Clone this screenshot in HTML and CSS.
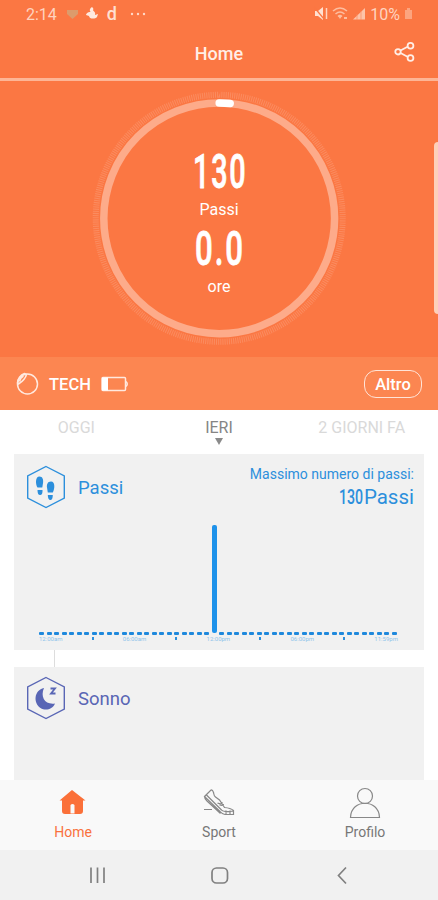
FILE: index.html
```html
<!DOCTYPE html>
<html lang="it">
<head>
<meta charset="utf-8" />
<meta name="viewport" content="width=device-width, initial-scale=1" />
<title>Home</title>
<link rel="stylesheet" href="styles.css">
</head>

<body>
<div class="phone">
	<div class="status">
		<span class="time">2:14</span>
		<svg class="heart" width="42" height="16" viewBox="0 0 42 16">
			<path d="M2 4h11v4l-5.500 5L2 8z" fill="#dc9b6c"/>
			<path d="M27 1c-2 1-3 3-1.500 5-2-.5-4.500 1-4.500 3l3 1c0 3 6 3.500 8 1l1-3-3 1c1-3-2-4-2-5 1-1 0-2-1-3z" fill="#ffe9df"/>
		</svg>
		<span class="d">d</span>
		<svg class="dots" width="16" height="4" viewBox="0 0 16 4">
			<circle cx="2" cy="2" r="1.200"/><circle cx="8" cy="2" r="1.200"/><circle cx="14" cy="2" r="1.200"/>
		</svg>
		<svg class="signal" width="54" height="16" viewBox="0 0 54 16">
			<path d="M3 5h3l5-4v13l-5-4H3z" fill="#ffe0d1"/>
			<path d="M2 1l10 12" stroke="#fb7743" stroke-width="1.200"/>
			<path d="M14.500 2v11" stroke="#ffd3bf" stroke-width="1.500"/>
			<g fill="none" stroke="#fdbd9f" stroke-width="1.500"><path d="M21 5q7-6 14 0M23.500 8q4.500-4 9 0M26 10.500q2-2 4 0"/></g>
			<path d="M28 13l-2-3h4zM32 11h3v2h-3z" fill="#fdbd9f"/>
			<path d="M41 13.500L53 2v11.500z" fill="#fdc3a8"/>
			<path d="M45 8v6M49 5v9" stroke="#fb8b5f" stroke-width=".7"/>
		</svg>
		<span class="percent">10%</span>
		<svg width="9" height="12" viewBox="0 0 9 12"><path d="M1 2h2V0h3v2h2v9H1z" fill="#fca47f"/></svg>
	</div>
	<div class="title">
		<h1>Home</h1>
		<svg class="share" width="22" height="22" viewBox="0 0 22 22">
			<path d="M6.500 9.500l7.500-4M6.500 12l7.500 4"/>
			<circle cx="4" cy="10.800" r="2.700"/><circle cx="16.500" cy="4.800" r="2.900"/><circle cx="16.500" cy="17" r="2.900"/>
		</svg>
	</div>
	<div class="hero">
		<svg width="438" height="276" viewBox="0 0 438 276">
			<circle class="ticks" cx="219.200" cy="137.300" r="123.500" pathLength="720"/>
			<circle class="ring" cx="219.200" cy="137.300" r="115.400"/>
			<path class="done" d="M219.200 21.900a115.400 115.400 0 0 1 11 .5"/>
			<text class="num" x="193" y="107" textLength="54.500" lengthAdjust="spacingAndGlyphs">130</text>
			<text class="unit" x="219" y="133.500">Passi</text>
			<text class="num" x="195" y="183.500" textLength="50" lengthAdjust="spacingAndGlyphs">0.0</text>
			<text class="unit" x="219" y="210.500">ore</text>
		</svg>
	</div>
	<div class="device">
		<svg class="band" width="24" height="24" viewBox="0 0 24 24">
			<circle cx="12.500" cy="12" r="10"/>
			<path d="M2.500 11c0-4 3-8 7-9.500l2 1c-1 4-4 7-8 9.500zM4.500 9.500c.5-2.500 2-4.500 4-5.500"/>
		</svg>
		<span class="name">TECH</span>
		<svg class="battery" width="28" height="16" viewBox="0 0 28 16">
			<rect x="1" y="1.500" width="23.500" height="13" rx="1"/><path d="M25 5.500q2.500 2.500 0 5"/>
			<path class="full" d="M1 1.500h6v13H1z"/>
		</svg>
		<a class="more">Altro</a>
	</div>
	<ul class="days">
		<li>OGGI</li>
		<li class="current">IERI</li>
		<li>2 GIORNI FA</li>
	</ul>
	<div class="list">
		<div class="card steps">
			<div class="head">
				<svg width="40" height="44" viewBox="0 0 40 44">
					<path class="hex" d="M20 1.500L38.300 11v22L20 42.500 1.700 33V11z"/>
					<path d="M13.500 11.500c3 0 4 3 3.600 6l-.8 5h-4.800c-2-3-2.500-11 2-11zM11.500 25h5c.2 3-.5 5-2.400 5s-2.600-2-2.600-5z"/>
					<path d="M25 16.500c-3.500 0-4.300 3-4 6l.8 5h5c2-3.500 2.600-11-1.800-11zM21.800 30h5c0 3-.8 5-2.400 5s-2.600-2-2.600-5z"/>
				</svg>
				<h2>Passi</h2>
				<div class="max">
					<p>Massimo numero di passi:</p>
					<div class="total"><b>130</b><span>Passi</span></div>
				</div>
			</div>
			<div class="chart" id="chart"></div>
			<div class="axis">
				<span>12:00am</span><i></i><span>06:00am</span><i></i><span>12:00pm</span><i></i><span>06:00pm</span><i></i><span>11:59pm</span>
			</div>
		</div>
		<div class="card sleep">
			<div class="head">
				<svg width="40" height="44" viewBox="0 0 40 44">
					<path class="hex" d="M20 1.500L38.300 11v22L20 42.500 1.700 33V11z"/>
					<path d="M18 12C8 14 7 27 14.500 32c5 3 12 1.500 14.500-4.500C19 29 14 21 18 12z"/>
					<path class="zed" d="M24.500 12.500h4.500l-4 5h4.500"/>
				</svg>
				<h2>Sonno</h2>
			</div>
		</div>
	</div>
	<div class="nav">
		<a class="on">
			<svg width="32" height="32" viewBox="0 0 32 32"><path d="M15 3l13.500 10.500H26V24q0 3-3 3H8q-3 0-3-3V13.500H2.500zM13.500 18v8.500h4V18q-2-2-4 0z" fill-rule="evenodd"/></svg>
			<span>Home</span>
		</a>
		<a>
			<svg width="32" height="32" viewBox="0 0 32 32">
				<path d="M1.500 9.500L8 3c1.500-.5 2 1 2.500 2.500s0 3 2 4.500l4 3 5 7.500q6 .5 9 3v4H22q-3-.5-5-3zM1.500 9.500c0 2 1 3 2.500 4.500L17.500 26.500M3.500 8l15 15q2 2.500 12 1M14.500 16q5 2 4.500-1M16.500 18q4 1 4-1M23 23.500v4M27 23.500v4M1 22.500h8"/>
			</svg>
			<span>Sport</span>
		</a>
		<a>
			<svg width="32" height="32" viewBox="0 0 32 32"><circle cx="16" cy="9" r="7.500"/><path d="M1.500 30.500C2 11.500 30 11.500 30.500 30.500z"/></svg>
			<span>Profilo</span>
		</a>
	</div>
	<div class="keys">
		<svg width="438" height="50" viewBox="0 0 438 50">
			<path d="M91 17.500v15.500M97.500 17.500v15.500M104 17.500v15.500"/>
			<rect x="212" y="18" width="15.500" height="15" rx="4.500"/>
			<path d="M346 17.500l-7.500 8 7.500 8"/>
		</svg>
	</div>
	<div class="edge"></div>
</div>
<script type="text/javascript">
  // one bar for every half hour of the day
  var chart = document.getElementById("chart");
  for (var i = 0; i < 48; i++) {
    var bar = document.createElement("i");
    // 130 steps, all at noon
    if (i == 23) {
      bar.className = "peak";
      bar.style.height = "108px";
    }
    chart.appendChild(bar);
  }
</script>
</body>
</html>
```
FILE: styles.css
```css
*{ padding:0; margin:0; list-style:none; box-sizing:border-box;}
body{ font-family:Roboto, "Liberation Sans", sans-serif; background:#fff;}
h1, h2{ font-weight:400;}
svg{ display:block; flex:none;}
.phone{
	width:438px;
	height:900px;
	position:relative;
	overflow:hidden;
	display:flex;
	flex-direction:column;
}

.status{ height:28px; background:#fb7743; color:#ffd3bf; display:flex; align-items:center; padding:0 25px 0 26px; font-size:16px; flex:none;}
.heart{ margin-left:8px;}
.d{ font-size:18px; line-height:24px; font-weight:500; color:#ffe0d1; margin:0 13px 0 0;}
.dots{ fill:#ffd9c8;}
.signal{ margin-left:auto;}
.percent{ margin:0 4px 0 4px;}

.title{ height:53px; background:#fb7743; border-bottom:3px solid #fdb595; position:relative; flex:none; text-align:center;}
.title h1{ font-size:18px; font-weight:500; line-height:51px; color:#ffeee6;}
.share{ position:absolute; right:22px; top:13px; fill:none; stroke:#ffeee6; stroke-width:1.8;}

.hero{ height:276px; background:#fb7743; flex:none;}
.ticks{ fill:none; stroke:#fff; stroke-opacity:.15; stroke-width:6; stroke-dasharray:1 1;}
.ring{ fill:none; stroke:#fdab8a; stroke-width:7.5;}
.done{ fill:none; stroke:#fff; stroke-width:7.5; stroke-linecap:round;}
.num{ font-size:48px; font-weight:500; letter-spacing:3px; fill:#fff; stroke:#fff; stroke-width:.8; stroke-linejoin:round;}
.unit{ font-size:16px; fill:#fff; text-anchor:middle;}

.device{ height:53px; background:#fc8651; display:flex; align-items:center; padding:0 16px 0 15px; color:#fff; flex:none;}
.band, .battery{ fill:none; stroke:#ffe9df; stroke-width:1.5;}
.battery .full{ fill:#fff; stroke:none;}
.name{ margin:2px 10px 0 10px; font-size:16.500px; font-weight:500;}
.more{ margin-left:auto; width:58px; height:28px; border:1.5px solid #ffe4d8; border-radius:12px; font-size:16.500px; font-weight:500; line-height:27px; text-align:center;}

.days{ height:44px; display:flex; padding:0 5px; flex:none;}
.days li{ flex:1; text-align:center; font-size:16px; line-height:35px; color:#d9d9d9;}
.days .current{ color:#858585; position:relative;}
.days .current:after{ content:""; position:absolute; left:50%; top:28px; margin-left:-4px; border:4px solid transparent; border-top:7px solid #8a8a8a; border-bottom:0;}

.list{ height:326px; padding:0 14px; overflow:hidden; flex:none;}
.card{ background:#f1f1f1;}
.steps{ height:196px; color:#2c8fdc; position:relative;}
.steps:after{ content:""; position:absolute; left:40px; top:196px; width:1px; height:17px; background:#ddd;}
.sleep{ height:130px; margin-top:17px; color:#5966b5;}
.head{ display:flex; padding:11px 10px 0 12px; height:70px;}
.sleep .head{ padding-top:9px;}
.head svg{ fill:currentColor;}
.head .hex{ fill:none; stroke:currentColor; stroke-width:1.4;}
.head .zed{ fill:none; stroke:currentColor; stroke-width:1.8;}
.head h2{ font-size:18.500px; line-height:47px; margin-left:12px;}
.max{ margin-left:auto;}
.max p{ font-size:14px; line-height:18px;}
.total{ display:flex; justify-content:flex-end; font-size:20.500px; line-height:29px;}
/* narrow digits */
.total b{ width:25px; font-weight:500; transform:scaleX(.69); transform-origin:0 0;}
.chart{ height:111px; margin:0 27px 0 25px; display:flex; align-items:flex-end; justify-content:space-between;}
.chart i{ width:5px; height:3px; background:#1e88dc; border-radius:1px;}
.chart .peak{ background:#1e92ea; border-radius:2px; margin-bottom:2px;}
.axis{ margin:0 26px 0 25px; display:flex; justify-content:space-between; align-items:center; font-size:6px; line-height:7px; color:#8fc4ea;}
.axis i{ width:2px; height:3px; background:#2c8fdc;}

.nav{ height:70px; background:#f9f9f9; display:flex; flex:none;}
.nav a{ flex:1; display:flex; flex-direction:column; align-items:center; padding-top:7px; font-size:14px; color:#777;}
.nav svg{ fill:none; stroke:#888; stroke-width:1.2;}
.nav span{ line-height:16px; margin-top:5px;}
.nav .on{ color:#f9713d;}
.nav .on svg{ fill:#fb7039; stroke:none;}
.keys{ height:50px; background:#f1f1f1; flex:none;}
.keys svg{ fill:none; stroke:#808080; stroke-width:1.7;}
.edge{ position:absolute; right:0; top:142px; width:4px; height:172px; background:#fdd0ba; border-radius:4px 0 0 4px;}
```
